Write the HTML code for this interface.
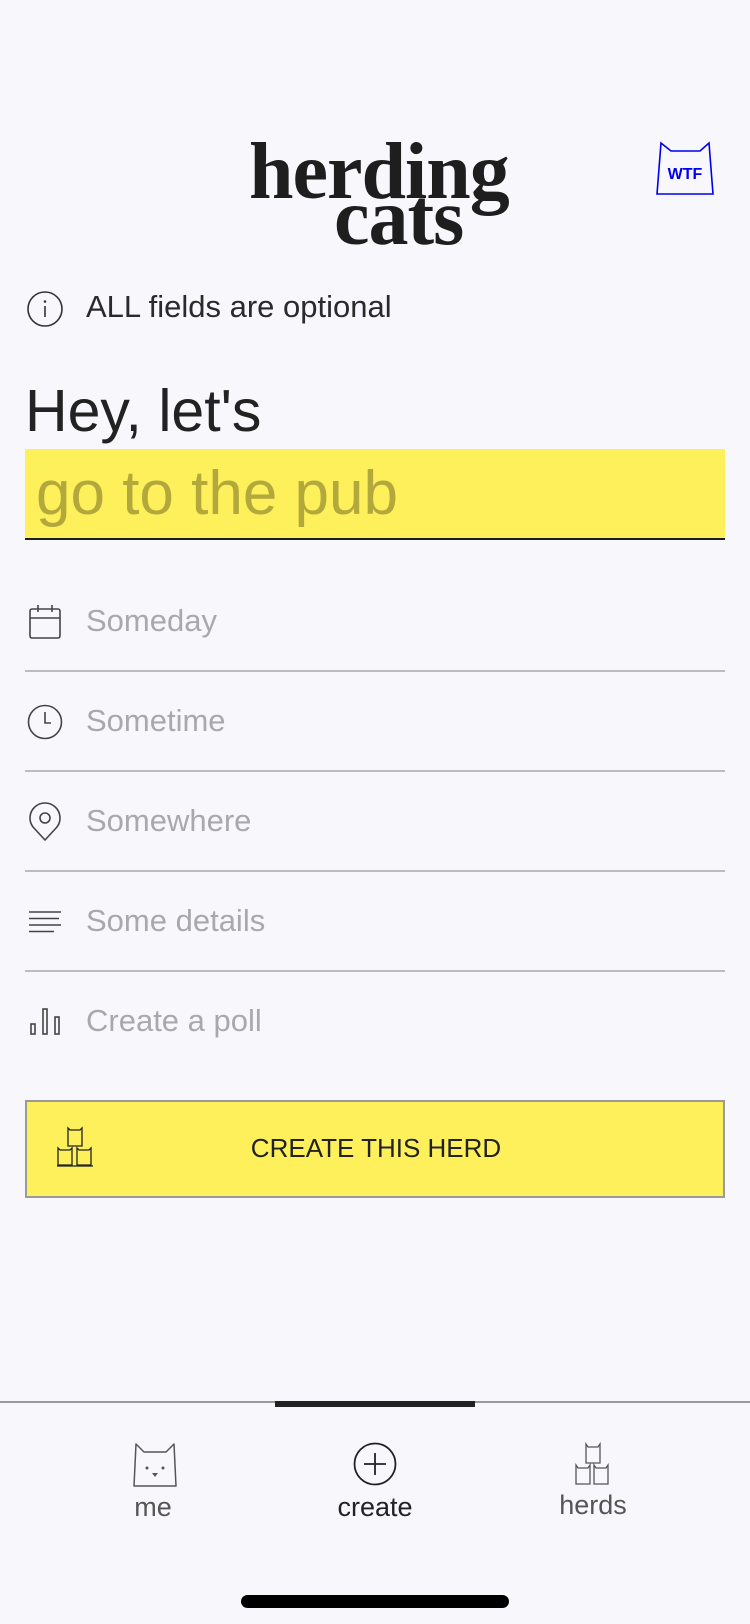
<!DOCTYPE html>
<html><head><meta charset="utf-8"><style>
*{margin:0;padding:0;box-sizing:border-box}
body{width:750px;height:1624px;background:#f8f8fc;position:relative;overflow:hidden;font-family:"Liberation Sans",sans-serif;color:#1e1e1e}
.a{position:absolute;white-space:nowrap}
.logo{font-family:"Liberation Serif",serif;font-weight:bold;font-size:80px;letter-spacing:-1px;color:#1e1e1e;line-height:1}
.row{position:absolute;left:86px;font-size:31px;color:#a8a8ae}
.line{position:absolute;left:25px;width:700px;height:2px;background:#bdbdbd}
</style></head><body>
<div class="a logo" style="left:249px;top:132px">herding</div>
<div class="a logo" style="left:334px;top:178px">cats</div>
<svg class="a" style="left:650px;top:136px" width="70" height="64" viewBox="650 136 70 64">
<path d="M661 143 L671 151 L700 151 L709 143 L713 194 L657 194 Z" fill="none" stroke="#0000ee" stroke-width="1.6"/>
<text x="685" y="179" text-anchor="middle" font-family="Liberation Sans" font-weight="bold" font-size="16" fill="#0000ee">WTF</text>
</svg>
<svg class="a" style="left:26px;top:290px" width="38" height="38"><circle cx="19" cy="19" r="17" fill="none" stroke="#333" stroke-width="1.6"/><line x1="19" y1="16" x2="19" y2="27" stroke="#333" stroke-width="1.6"/><circle cx="19" cy="11.5" r="1.3" fill="#333"/></svg>
<div class="a" style="left:86px;top:289px;font-size:31px;color:#2a2a2a">ALL fields are optional</div>
<div class="a" style="left:25px;top:377px;font-size:59px;color:#222">Hey, let's</div>
<div class="a" style="left:25px;top:449px;width:700px;height:91px;background:#fdf05a;border-bottom:2px solid #1e1e1e"></div>
<div class="a" style="left:36px;top:458px;font-size:62px;color:#b2a83c">go to the pub</div>

<svg class="a" style="left:29px;top:604px" width="32" height="36"><rect x="1" y="5" width="30" height="29" rx="2" fill="none" stroke="#444" stroke-width="1.6"/><line x1="1" y1="14" x2="31" y2="14" stroke="#444" stroke-width="1.6"/><line x1="9" y1="1" x2="9" y2="8" stroke="#444" stroke-width="1.6"/><line x1="23" y1="1" x2="23" y2="8" stroke="#444" stroke-width="1.6"/></svg>
<div class="row" style="top:603px">Someday</div>
<div class="line" style="top:670px"></div>
<svg class="a" style="left:27px;top:704px" width="36" height="36"><circle cx="18" cy="18" r="16.5" fill="none" stroke="#444" stroke-width="1.6"/><path d="M18 8 V19 H24" fill="none" stroke="#444" stroke-width="1.6"/></svg>
<div class="row" style="top:703px">Sometime</div>
<div class="line" style="top:770px"></div>
<svg class="a" style="left:28px;top:802px" width="34" height="40"><path d="M17 38 L5 25 A15 15 0 1 1 29 25 Z" fill="none" stroke="#444" stroke-width="1.6" stroke-linejoin="round"/><circle cx="17" cy="16" r="5" fill="none" stroke="#444" stroke-width="1.6"/></svg>
<div class="row" style="top:803px">Somewhere</div>
<div class="line" style="top:870px"></div>
<svg class="a" style="left:29px;top:910px" width="34" height="24"><g stroke="#444" stroke-width="1.6"><line x1="0" y1="2" x2="32" y2="2"/><line x1="0" y1="8.5" x2="30" y2="8.5"/><line x1="0" y1="15" x2="32" y2="15"/><line x1="0" y1="21.5" x2="25" y2="21.5"/></g></svg>
<div class="row" style="top:903px">Some details</div>
<div class="line" style="top:970px"></div>
<svg class="a" style="left:30px;top:1005px" width="34" height="32"><g fill="none" stroke="#444" stroke-width="1.6"><rect x="1" y="19" width="4" height="10"/><rect x="13" y="4" width="4" height="25"/><rect x="25" y="12" width="4" height="17"/></g></svg>
<div class="row" style="top:1003px">Create a poll</div>

<div class="a" style="left:25px;top:1100px;width:700px;height:98px;background:#fdf05a;border:2px solid #9a9a9a"></div>
<svg class="a" style="left:56px;top:1124px" width="42" height="46" viewBox="0 0 42 46">
<g fill="none" stroke="#222" stroke-width="1.3">
<path d="M12 22 L12 4 L14 6 L24 6 L26 4 L26 22 Z"/>
<path d="M2 41 L2 24 L4 26 L14 26 L16 24 L16 41 Z"/>
<path d="M21 41 L21 24 L23 26 L33 26 L35 24 L35 41 Z"/>
<path d="M1 42 H37"/>
</g></svg>
<div class="a" style="left:0;width:750px;text-align:center;top:1133px;font-size:26px;color:#222;padding-left:2px">CREATE THIS HERD</div>

<div class="a" style="left:0;top:1401px;width:750px;height:2px;background:#9a9a9a"></div>
<div class="a" style="left:275px;top:1401px;width:200px;height:6px;background:#222"></div>
<svg class="a" style="left:132px;top:1442px" width="46" height="46"><path d="M2 44 L4 2 L12 10 L34 10 L42 2 L44 44 Z" fill="none" stroke="#555" stroke-width="1.5" stroke-linejoin="round"/><circle cx="15" cy="26" r="1.5" fill="#555"/><circle cx="31" cy="26" r="1.5" fill="#555"/><path d="M20 31 H26 L23 35 Z" fill="#555"/></svg>
<div class="a" style="left:103px;width:100px;text-align:center;top:1492px;font-size:27px;color:#555">me</div>
<svg class="a" style="left:353px;top:1442px" width="44" height="44"><circle cx="22" cy="22" r="20.5" fill="none" stroke="#222" stroke-width="1.8"/><path d="M22 11 V33 M11 22 H33" stroke="#222" stroke-width="1.8"/></svg>
<div class="a" style="left:300px;width:150px;text-align:center;top:1492px;font-size:27px;color:#222">create</div>
<svg class="a" style="left:575px;top:1442px" width="42" height="46" viewBox="0 0 42 46">
<g fill="none" stroke="#555" stroke-width="1.3">
<path d="M11 21 L11 2 L13 5 L23 5 L25 2 L25 21 Z"/>
<path d="M1 42 L1 23 L3 26 L13 26 L15 23 L15 42 Z"/>
<path d="M19 42 L19 23 L21 26 L31 26 L33 23 L33 42 Z"/>
</g></svg>
<div class="a" style="left:543px;width:100px;text-align:center;top:1490px;font-size:27px;color:#555">herds</div>
<div class="a" style="left:241px;top:1595px;width:268px;height:13px;border-radius:7px;background:#000"></div>
</body></html>
